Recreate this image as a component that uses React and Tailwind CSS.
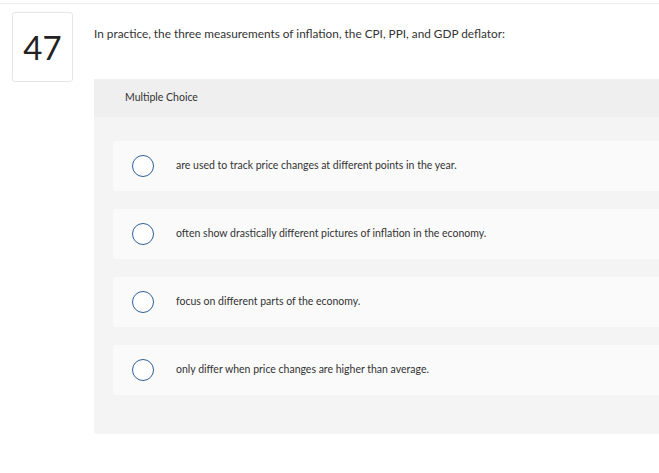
const options = [
  'are used to track price changes at different points in the year.',
  'often show drastically different pictures of inflation in the economy.',
  'focus on different parts of the economy.',
  'only differ when price changes are higher than average.',
];

const App = () => {
  return (
    <div className="min-h-[473px] bg-white font-['Lato',sans-serif] text-[#333]">
      <div className="h-[3px]" />
      <div className="h-px bg-[#ececec]" />
      <div className="flex pt-2">
        <div className="ml-3 w-[61px] h-[70px] shrink-0 flex items-center justify-center border border-[#e6e6e6] rounded-[3px] text-[33px] text-[#222] leading-none">
          47
        </div>
        <div className="ml-[21px] flex-1">
          <p className="mt-[15px] text-[11.8px] leading-[14px]">
            In practice, the three measurements of inflation, the CPI, PPI, and GDP deflator:
          </p>
          <div className="mt-[38px] rounded-bl-[3px] bg-[#f4f4f4] overflow-hidden">
            <div className="h-[38px] flex items-center pl-[31px] bg-[#efefef] text-[10.5px]">
              Multiple Choice
            </div>
            <div className="flex flex-col gap-[18px] pl-[19px] pt-[24px] pb-[39px]">
              {options.map((text) => (
                <div
                  key={text}
                  className="h-[50px] flex items-center pl-[19px] rounded-l-[3px] bg-[#fafafa]"
                >
                  <span className="w-[22px] h-[22px] shrink-0 rounded-full border-[1.5px] border-[#2f6197] bg-white" />
                  <span className="ml-[22px] text-[10.5px]">{text}</span>
                </div>
              ))}
            </div>
          </div>
        </div>
      </div>
    </div>
  );
};

export default App;
